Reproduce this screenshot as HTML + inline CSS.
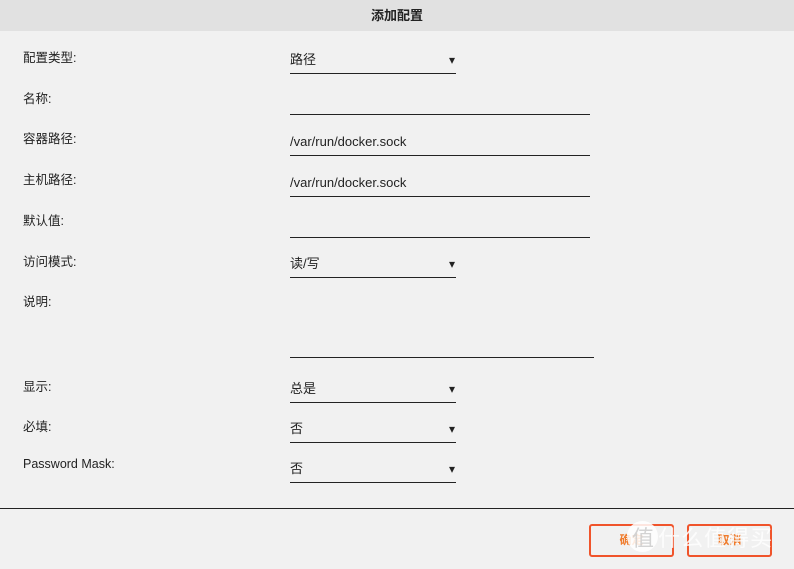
<!DOCTYPE html>
<html><head><meta charset="utf-8"><style>
*{margin:0;padding:0;box-sizing:border-box}
body{width:794px;height:569px;background:#f1f1f1;position:relative;overflow:hidden;font-family:"Liberation Sans","Noto Sans CJK SC",sans-serif;color:#222}
.hd{position:absolute;left:0;top:0;width:794px;height:31px;background:#e1e1e1;text-align:center;font-size:13px;font-weight:bold;line-height:31px}
.l{position:absolute;left:23px;font-size:12.5px}
.f{position:absolute;left:290px;border-bottom:1px solid #222;font-size:13px;height:22px;line-height:16px}
.s{width:166px}.s::after{content:"▾";position:absolute;right:1px;top:0;font-size:12px}
.t{width:300px}
.hr{position:absolute;left:0;top:508px;width:794px;height:1px;background:#222}
.b{position:absolute;top:524px;width:85px;height:33px;border:2px solid #f0542b;border-radius:3px;color:#f07a2a;font-size:12px;text-align:center;line-height:29px;font-weight:bold}
.wm{position:absolute;top:521px;left:628px;color:#fff;font-size:22px;opacity:.85;letter-spacing:1px}
.c{position:absolute;left:627px;top:521px;width:31px;height:31px;border-radius:50%;background:rgba(255,255,255,.85)}
</style></head><body>
<div class="hd">添加配置</div>
<div class="l" style="top:47px">配置类型:</div><div class="f s" style="top:52px">路径</div>
<div class="l" style="top:88px">名称:</div><div class="f t" style="top:93px"></div>
<div class="l" style="top:128px">容器路径:</div><div class="f t" style="top:134px">/var/run/docker.sock</div>
<div class="l" style="top:169px">主机路径:</div><div class="f t" style="top:175px">/var/run/docker.sock</div>
<div class="l" style="top:210px">默认值:</div><div class="f t" style="top:216px"></div>
<div class="l" style="top:251px">访问模式:</div><div class="f s" style="top:256px">读/写</div>
<div class="l" style="top:291px">说明:</div><div class="f" style="top:336px;width:304px"></div>
<div class="l" style="top:376px">显示:</div><div class="f s" style="top:381px">总是</div>
<div class="l" style="top:416px">必填:</div><div class="f s" style="top:421px">否</div>
<div class="l" style="top:457px">Password Mask:</div><div class="f s" style="top:461px">否</div>
<div class="hr"></div>
<div class="b" style="left:589px">确定</div>
<div class="b" style="left:687px">取消</div>
<div class="c"></div>
<div class="wm"><span style="color:#ccc;position:relative;left:4px">值</span>&nbsp;什么值得买</div>
</body></html>
